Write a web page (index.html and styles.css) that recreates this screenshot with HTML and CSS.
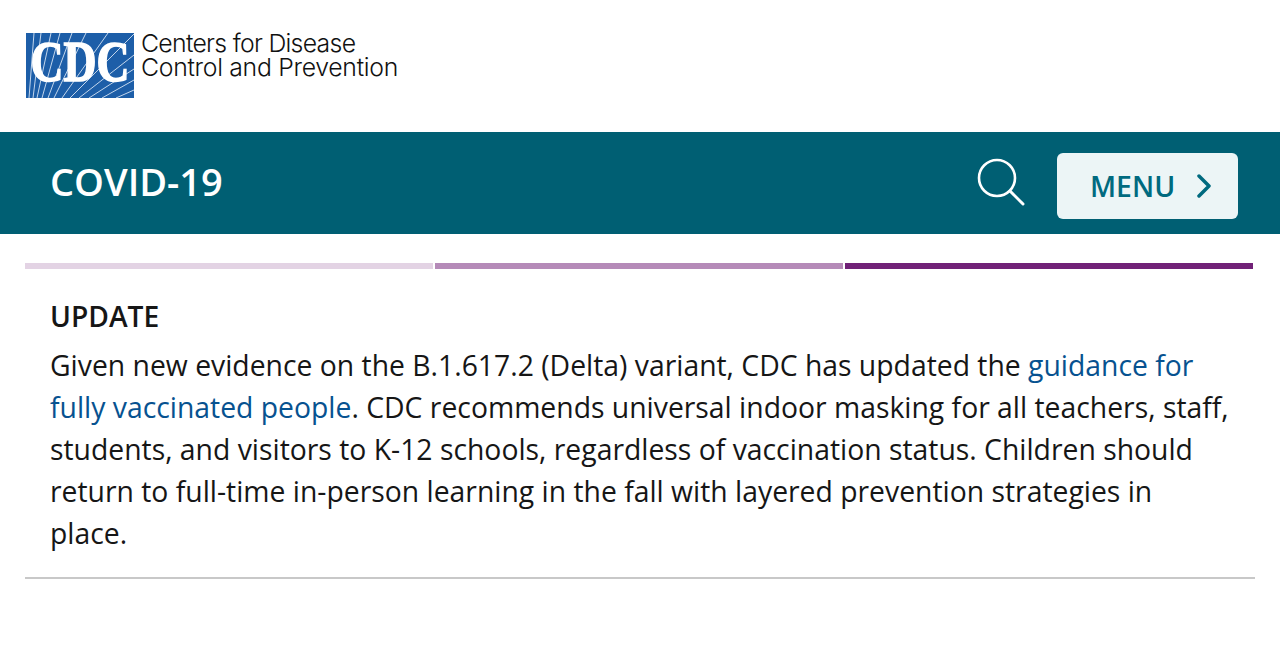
FILE: index.html
```html
<!DOCTYPE html>
<html lang="en">
<head>
	<meta charset="UTF-8">
	<title>COVID-19</title>
	<link rel="stylesheet" href="styles.css">
</head>
<body>
	<header class="logoBar">
		<svg class="cdcMark" width="108" height="65" viewBox="0 0 108 65">
			<rect width="108" height="65" fill="#1d5ea8"/>
			<g stroke="#c3d6ec" stroke-width="1" fill="none">
				<path d="M3 65 L8 0"/>
				<path d="M7 65 L15 0"/>
				<path d="M11 65 L25 0"/>
				<path d="M16 65 L34 0"/>
				<path d="M22 65 L46 0"/>
				<path d="M28 65 L60 0"/>
				<path d="M36 65 L82 0"/>
				<path d="M44 65 L108 1"/>
				<path d="M53 65 L108 22"/>
				<path d="M63 65 L108 36"/>
				<path d="M76 65 L108 47"/>
				<path d="M90 65 L108 57"/>
			</g>
			<text class="cdcLetters" x="54" y="48" text-anchor="middle" textLength="99" lengthAdjust="spacingAndGlyphs">CDC</text>
		</svg>
		<div class="logoText">
			<span class="logoLine">Centers for Disease</span>
			<span>Control and Prevention</span>
		</div>
	</header>
	<nav class="siteBar">
		<a href="#" class="siteTitle">COVID-19</a>
		<div class="siteTools">
			<svg class="searchIcon" width="50" height="50" viewBox="0 0 50 50">
				<circle cx="21" cy="21" r="18" fill="none" stroke="#fff" stroke-width="2.6"/>
				<path d="M34 34 L47 47" stroke="#fff" stroke-width="3" stroke-linecap="round"/>
			</svg>
			<a href="#" class="menuBtn">
				MENU
				<svg width="14" height="24" viewBox="0 0 14 24">
					<path d="M2 2 L12 12 L2 22" fill="none" stroke="#006a7f" stroke-width="3.5" stroke-linecap="round" stroke-linejoin="round"/>
				</svg>
			</a>
		</div>
	</nav>
	<main class="content">
		<div class="stripes">
			<span class="stripe light"></span>
			<span class="stripe mid"></span>
			<span class="stripe dark"></span>
		</div>
		<section class="update">
			<h2>UPDATE</h2>
			<p>Given new evidence on the B.1.617.2 (Delta) variant, CDC has updated the <a href="#">guidance for fully vaccinated people</a>. CDC recommends universal indoor masking for all teachers, staff, students, and visitors to K-12 schools, regardless of vaccination status. Children should return to full-time in-person learning in the fall with layered prevention strategies in place.</p>
		</section>
	</main>
</body>
</html>
```

FILE: styles.css
```css
* {
	padding: 0;
	margin: 0;
	box-sizing: border-box;
}
body {
	font-family: "Open Sans", sans-serif;
	color: #161616;
	background: #fff;
}
a {
	text-decoration: none;
}
/* logo */
.logoBar {
	display: flex;
	height: 132px;
	padding: 33px 0 0 26px;
}
.cdcLetters {
	font-family: "Liberation Serif", serif;
	font-weight: bold;
	font-size: 58px;
	fill: #fff;
	stroke: #fff;
	stroke-width: 1.6px;
}
.logoText {
	display: flex;
	flex-direction: column;
	margin: -2px 0 0 7px;
	font-family: "Inter", "Liberation Sans", sans-serif;
	font-weight: 300;
	font-size: 24.8px;
	line-height: 24px;
	color: #111;
	letter-spacing: -0.3px;
}
.logoLine {
	letter-spacing: -0.7px;
}
/* teal bar */
.siteBar {
	display: flex;
	justify-content: space-between;
	align-items: center;
	height: 102px;
	padding: 0 42px 0 50px;
	background: #005f73;
}
.siteTitle {
	margin-top: -4px;
	color: #fff;
	font-size: 38px;
	font-weight: 600;
}
.siteTools {
	display: flex;
	align-items: center;
	gap: 31px;
}
.searchIcon {
	margin-top: -2px;
}
.menuBtn {
	display: flex;
	align-items: center;
	gap: 22px;
	width: 181px;
	height: 66px;
	margin-top: 6px;
	padding-left: 33px;
	background: #ecf5f6;
	border-radius: 6px;
	color: #006a7f;
	font-size: 28.35px;
	font-weight: 600;
}
/* update block */
.content {
	margin: 0 25px;
	padding-top: 29px;
}
.stripes {
	display: flex;
	gap: 2px;
	width: 1228px;
}
.stripe {
	flex: 1;
	height: 6px;
}
.light {
	background: #e3d3e4;
}
.mid {
	background: #b58ab8;
}
.dark {
	background: #712177;
}
.update {
	padding: 29px 25px 23px;
	border-bottom: 2px solid #c8c8c8;
}
.update h2 {
	font-size: 28.2px;
	font-weight: 600;
	line-height: 36px;
	margin-bottom: 10px;
}
.update p {
	font-size: 28.34px;
	line-height: 42px;
}
.update a {
	color: #075290;
}
```
